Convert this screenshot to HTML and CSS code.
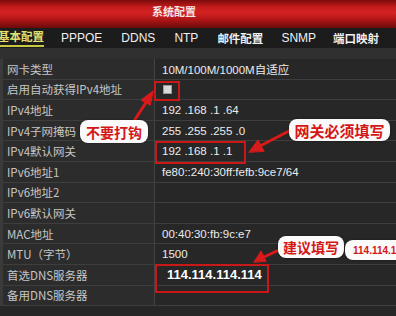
FILE: index.html
```html
<!DOCTYPE html>
<html lang="zh">
<head>
<meta charset="utf-8">
<link rel="stylesheet" href="styles.css">
</head>
<body>
<div class="page">
  <div class="titlebar">系统配置</div>
  <div class="tabs">
    <span class="tab active cjk">基本配置</span>
    <span class="tab">PPPOE</span>
    <span class="tab">DDNS</span>
    <span class="tab">NTP</span>
    <span class="tab cjk">邮件配置</span>
    <span class="tab">SNMP</span>
    <span class="tab cjk">端口映射</span>
  </div>
  <div class="strip"></div>
  <div class="table">
    <div class="row"><div class="label">网卡类型</div><div class="value">10M/100M/1000M自适应</div></div>
    <div class="row"><div class="label">启用自动获得IPv4地址</div><div class="value"><span class="checkbox"></span></div></div>
    <div class="row"><div class="label">IPv4地址</div><div class="value">192 .168 .1 .64</div></div>
    <div class="row"><div class="label">IPv4子网掩码</div><div class="value">255 .255 .255 .0</div></div>
    <div class="row"><div class="label">IPv4默认网关</div><div class="value">192 .168 .1 .1</div></div>
    <div class="row"><div class="label">IPv6地址1</div><div class="value">fe80::240:30ff:fefb:9ce7/64</div></div>
    <div class="row"><div class="label">IPv6地址2</div><div class="value"></div></div>
    <div class="row"><div class="label">IPv6默认网关</div><div class="value"></div></div>
    <div class="row"><div class="label">MAC地址</div><div class="value">00:40:30:fb:9c:e7</div></div>
    <div class="row"><div class="label">MTU（字节）</div><div class="value">1500</div></div>
    <div class="row"><div class="label">首选DNS服务器</div><div class="value dns">114.114.114.114</div></div>
    <div class="row"><div class="label">备用DNS服务器</div><div class="value"></div></div>
  </div>

  <div class="hl hl-check"></div>
  <div class="hl hl-gw"></div>
  <div class="hl hl-dns"></div>

  <svg class="arrows" width="396" height="316" viewBox="0 0 396 316">
    <g fill="#d91a1a" stroke="#d91a1a" stroke-width="3" stroke-linecap="round">
      <line x1="134" y1="121" x2="147" y2="101"/>
      <polygon points="153,91 141,100 150,105" stroke-width="1"/>
      <line x1="289" y1="131" x2="260" y2="146"/>
      <polygon points="249,152 258,140 264,151" stroke-width="1"/>
      <line x1="279" y1="250" x2="264" y2="257"/>
      <polygon points="254,262 261,251 266,261" stroke-width="1"/>
    </g>
  </svg>

  <div class="bubble b1">不要打钩</div>
  <div class="bubble b2">网关必须填写</div>
  <div class="bubble b3">建议填写</div>
  <div class="bubble b4">114.114.114.114</div>
</div>
</body>
</html>
```

FILE: styles.css
```css
* { box-sizing: border-box; margin: 0; padding: 0; }
html, body { width: 396px; height: 316px; overflow: hidden; background: #262626; }
body { font-family: "Noto Sans CJK SC", "Liberation Sans", sans-serif; }

.page { position: relative; width: 396px; height: 316px; overflow: hidden; background: #272727; }

.titlebar {
  height: 28px;
  background: linear-gradient(to bottom, #7a0c0c 0%, #c41a1a 25%, #d42222 45%, #b01616 70%, #6a0a0a 100%);
  color: #f4e6e6;
  font-size: 11px;
  font-weight: bold;
  text-align: center;
  line-height: 22px;
  text-indent: -48px;
}

.tabs {
  height: 20px;
  background: #1c1c1c;
  display: flex;
  align-items: center;
  color: #f0f0f0;
  font-size: 12px;
  font-family: "Liberation Sans", "Noto Sans CJK SC", sans-serif;
}
.tab { white-space: nowrap; }
.tab.cjk { font-size: 11.5px; font-weight: bold; }
.tab:nth-child(1) { margin-left: -2px; }
.tab:nth-child(2) { margin-left: 17px; }
.tab:nth-child(3) { margin-left: 19px; }
.tab:nth-child(4) { margin-left: 19px; }
.tab:nth-child(5) { margin-left: 19px; }
.tab:nth-child(6) { margin-left: 18px; }
.tab:nth-child(7) { margin-left: 17px; }
.tab.active {
  color: #e0e070;
  border-bottom: 2px solid #c8c840;
  line-height: 15px;
}

.strip { height: 11px; background: #303030; }

.table {
  display: grid;
  grid-auto-rows: 20.6px;
  border-left: 3px solid #3a3a3a;
  background: #2a2a2a;
}
.row {
  display: grid;
  grid-template-columns: 152px 1fr;
  border-bottom: 1px solid #3e3e3e;
}
.label {
  color: #c6c6c6;
  font-size: 11.5px;
  padding-left: 4px;
  display: flex;
  align-items: center;
  border-right: 1px solid #444;
  white-space: nowrap;
  background: #2c2c2c;
}
.value {
  color: #ececec;
  font-size: 11.5px;
  padding-left: 7px;
  display: flex;
  align-items: center;
  white-space: nowrap;
  font-family: "Liberation Sans", "Noto Sans CJK SC", sans-serif;
  background: #272727;
}
.value.dns { font-weight: bold; font-size: 13px; padding-left: 12px; color: #fff; }

.checkbox {
  width: 9px; height: 9px;
  margin-left: 1px;
  background: #d8d8d8;
  border: 1px solid #9a9a9a;
}

.hl { position: absolute; border: 2px solid #c81818; }
.hl-check { left: 154px; top: 81px; width: 26px; height: 20px; }
.hl-gw { left: 155px; top: 141px; width: 91px; height: 23px; }
.hl-dns { left: 155px; top: 264px; width: 114px; height: 29px; }

.arrows { position: absolute; left: 0; top: 0; }

.bubble {
  position: absolute;
  background: #fafafa;
  color: #d41616;
  font-weight: bold;
  border-radius: 8px;
  display: flex;
  align-items: center;
  justify-content: center;
  white-space: nowrap;
  overflow: hidden;
  box-shadow: 0 0 2px rgba(0,0,0,0.5);
}
.b1 { left: 80px; top: 120px; width: 68px; height: 23px; font-size: 14px; }
.b2 { left: 289px; top: 119px; width: 101px; height: 22px; font-size: 15px; }
.b3 { left: 278px; top: 236px; width: 66px; height: 22px; font-size: 14px; }
.b4 { left: 345px; top: 240px; width: 70px; height: 20px; font-size: 10px; justify-content: flex-start; padding-left: 8px; font-family: "Liberation Sans", sans-serif; border-radius: 8px 0 0 8px; }
```
